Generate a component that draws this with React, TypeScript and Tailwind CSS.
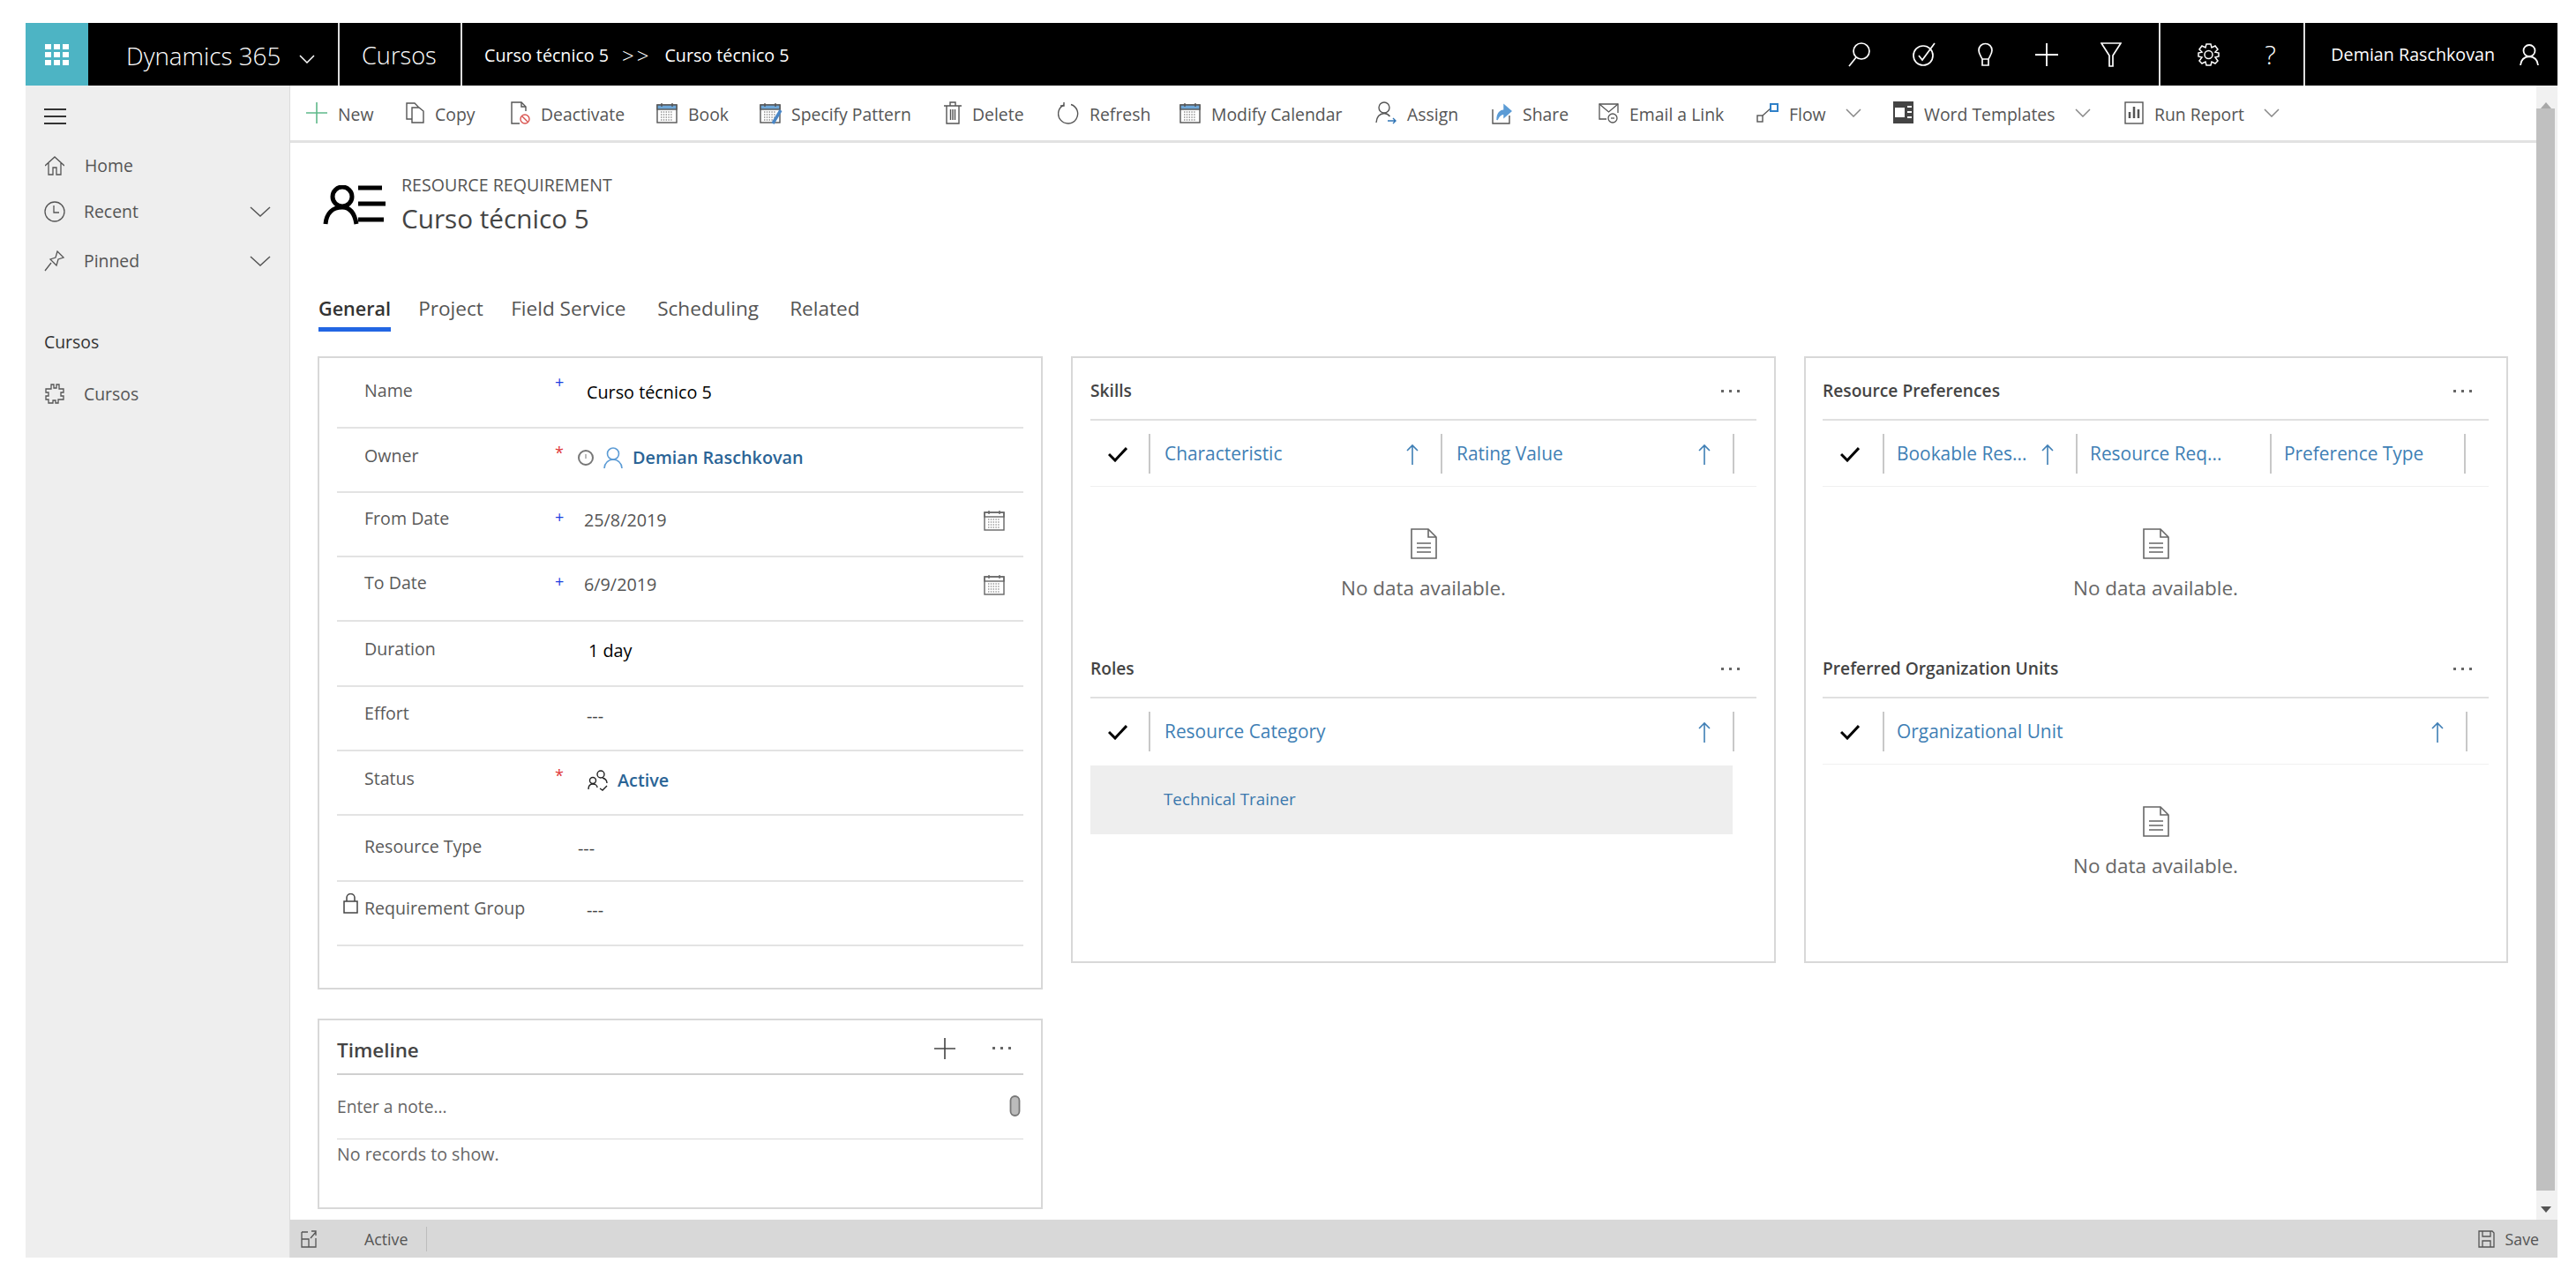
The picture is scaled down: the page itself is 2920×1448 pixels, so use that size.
import type { ReactNode } from 'react';

function Ico({ w, h, vb, sw = 1.5, className = '', children }: { w: number; h: number; vb?: string; sw?: number; className?: string; children: ReactNode }) {
  return (
    <svg width={w} height={h} viewBox={vb ?? `0 0 ${w} ${h}`} fill="none" stroke="currentColor" strokeWidth={sw} className={`shrink-0 ${className}`}>
      {children}
    </svg>
  );
}

const Chevron = ({ w = 24, h = 12, className = '' }: { w?: number; h?: number; className?: string }) => (
  <Ico w={w} h={h} className={className}><path d={`M1 1 L${w / 2} ${h - 1} L${w - 1} 1`} /></Ico>
);

const UserIco = ({ className = '', sw = 1.7 }: { className?: string; sw?: number }) => (
  <Ico w={22} h={24} vb="0 0 22 24" sw={sw} className={className}>
    <circle cx="11" cy="7.5" r="6.5" />
    <path d="M1 24 C1.5 18 5 14.5 11 14 C17 14.5 20.5 18 21 24" />
  </Ico>
);

const CalendarIco = ({ className = '', blue = false }: { className?: string; blue?: boolean }) => (
  <Ico w={24} h={24} sw={1.4} className={className}>
    <rect x="1" y="3" width="22" height="20" />
    <rect x="1" y="3" width="22" height="5" fill={blue ? '#6ea7d8' : 'none'} />
    <path d="M6 1v4M18 1v4" />
    <path d="M5 11h14M5 14h14M5 17h14M5 20h14" strokeDasharray="1.4 1.4" strokeWidth="1" />
  </Ico>
);

const PageIco = ({ className = '' }: { className?: string }) => (
  <Ico w={30} h={35} sw={1.6} className={className}>
    <path d="M1 1 H20 L29 10 V34 H1 Z" />
    <path d="M20 1 V10 H29" />
    <path d="M7 17 H23 M7 22 H23 M7 27 H23" />
  </Ico>
);

const Dots = ({ className = '' }: { className?: string }) => (
  <span className={`flex gap-[6px] ${className}`}>
    <i className="block w-[3px] h-[3px] bg-[#666]" />
    <i className="block w-[3px] h-[3px] bg-[#666]" />
    <i className="block w-[3px] h-[3px] bg-[#666]" />
  </span>
);

const Arrow = ({ className = '' }: { className?: string }) => (
  <Ico w={14} h={24} sw={1.6} className={className}><path d="M7 24 V2 M1 8 L7 2 L13 8" /></Ico>
);

const toolbar: { label: string; cls: string; icon: ReactNode; caret?: boolean }[] = [
  { label: 'New', cls: 'w-[113px]', icon: <Ico w={24} h={24} sw={1.6} className="text-[#5fb98a]"><path d="M12 0v24M0 12h24" /></Ico> },
  { label: 'Copy', cls: 'w-[119px]', icon: <Ico w={21} h={24} sw={1.4}><path d="M1 1 H10 L14 5 V19 H1 Z" /><path d="M7 6 H15 L20 10 V23 H7 Z" fill="#fff" /></Ico> },
  { label: 'Deactivate', cls: 'w-[165px]', icon: <Ico w={22} h={26} sw={1.4}><path d="M17 11 V6 L12 1 H1 V25 H10" /><path d="M12 1 V6 H17" /><circle cx="16" cy="20" r="5" stroke="#d9534f" /><path d="M13 17 L19 23" stroke="#d9534f" /></Ico> },
  { label: 'Book', cls: 'w-[117px]', icon: <CalendarIco blue /> },
  { label: 'Specify Pattern', cls: 'w-[209px]', icon: <span className="relative"><CalendarIco blue /><Ico w={14} h={18} sw={3.5} className="absolute right-[-2px] bottom-[-2px] text-[#4a86c5]"><path d="M12 1 L3 16" /></Ico></span> },
  { label: 'Delete', cls: 'w-[129px]', icon: <Ico w={20} h={26} sw={1.4}><path d="M0 5 H20 M7 5 V1 H13 V5 M3 5 V25 H17 V5 M7.5 9 V21 M10 9 V21 M12.5 9 V21" /></Ico> },
  { label: 'Refresh', cls: 'w-[138px]', icon: <Ico w={24} h={26} sw={1.4}><path d="M15 3.5 A11 11 0 1 1 7 4" /><path d="M7 1 V5 H3" /></Ico> },
  { label: 'Modify Calendar', cls: 'w-[222px]', icon: <CalendarIco blue /> },
  { label: 'Assign', cls: 'w-[132px]', icon: <Ico w={24} h={26} sw={1.4}><circle cx="10" cy="7" r="6" /><path d="M1 24 C1.5 17 5 14 10 13.5 C13 13.7 15 15 16.5 17" /><path d="M14 22 H23 M20 19 L23 22 L20 25" stroke="#2f74b5" /></Ico> },
  { label: 'Share', cls: 'w-[121px]', icon: <Ico w={23} h={26} sw={1.4}><path d="M1 9 V25 H20 V16" /><path d="M6 21 C6 13 10 10 14 10 V4 L22 11 L14 18 V14 C11 14 8 16 6 21 Z" fill="#5b9bd5" stroke="#5b9bd5" /></Ico> },
  { label: 'Email a Link', cls: 'w-[179px]', icon: <Ico w={23} h={24} sw={1.3}><path d="M9 19 H1 V2 H22 V12" /><path d="M1 2 L11.5 11 L22 2" /><circle cx="16" cy="18" r="5" /><path d="M14 18 h4" /></Ico> },
  { label: 'Flow', cls: 'w-[155px]', caret: true, icon: <Ico w={25} h={22} sw={1.4}><rect x="1" y="14" width="6" height="7" /><path d="M7 14 L16 6" /><rect x="16" y="1" width="8" height="8" stroke="#2f80c8" strokeWidth="2" /></Ico> },
  { label: 'Word Templates', cls: 'w-[262px]', caret: true, icon: <span className="relative block w-[23px] h-[25px] bg-[#444]"><span className="absolute left-[2px] top-[7px] w-[11px] h-[11px] bg-white" /><span className="absolute right-[2px] top-[5px] w-[5px] h-[2px] bg-white" /><span className="absolute right-[2px] top-[11px] w-[5px] h-[2px] bg-white" /><span className="absolute right-[2px] top-[17px] w-[5px] h-[2px] bg-white" /></span> },
  { label: 'Run Report', cls: 'w-[200px]', caret: true, icon: <Ico w={22} h={26} sw={1.4}><rect x="1" y="1" width="20" height="24" /><path d="M6 19 V12 M11 19 V6 M16 19 V9" strokeWidth="2.5" /></Ico> },
];

const tabs = [
  { label: 'Project', w: 'w-[105px]' },
  { label: 'Field Service', w: 'w-[166px]' },
  { label: 'Scheduling', w: 'w-[150px]' },
  { label: 'Related', w: 'w-[90px]' },
];

const rows = [
  { label: 'Name', mark: 'blue', h: 'h-[78px]', lpt: 'pt-[22px]', vpt: 'pt-[24px]', vx: 'w-[36px]', value: <span className="text-black font-medium">Curso técnico 5</span> },
  { label: 'Owner', mark: 'red', h: 'h-[71px]', lpt: 'pt-[16px]', vpt: 'pt-[18px]', vx: 'w-[26px]', value: (
    <span className="flex items-center gap-[11px] text-[#2a6496] font-semibold">
      <Ico w={18} h={18} sw={2} className="text-[#777]"><circle cx="9" cy="9" r="8" /><path d="M9 5v5" strokeWidth="1" /></Ico>
      <UserIco className="text-[#5b9bd5]" sw={1.6} />
      Demian Raschkovan
    </span>
  ) },
  { label: 'From Date', mark: 'blue', h: 'h-[71px]', lpt: 'pt-[14px]', vpt: 'pt-[16px]', vx: 'w-[33px]', cal: true, value: <span className="text-[#555]">25/8/2019</span> },
  { label: 'To Date', mark: 'blue', h: 'h-[71px]', lpt: 'pt-[14px]', vpt: 'pt-[16px]', vx: 'w-[33px]', cal: true, value: <span className="text-[#555]">6/9/2019</span> },
  { label: 'Duration', h: 'h-[72px]', lpt: 'pt-[16px]', vpt: 'pt-[18px]', vx: 'w-[38px]', value: <span className="text-black font-medium">1 day</span> },
  { label: 'Effort', h: 'h-[71px]', lpt: 'pt-[15px]', vpt: 'pt-[18px]', vx: 'w-[36px]', value: <span className="text-[#444] font-medium">---</span> },
  { label: 'Status', mark: 'red', h: 'h-[71px]', lpt: 'pt-[16px]', vpt: 'pt-[18px]', vx: 'w-[37px]', value: (
    <span className="flex items-center gap-[10px] text-[#2a6496] font-semibold">
      <Ico w={24} h={24} sw={1.4} className="text-[#222]"><circle cx="15" cy="5" r="4" /><circle cx="6" cy="12" r="3.5" /><path d="M1 22 C1 18 3 16 6 16 C9 16 11 18 11 20" /><path d="M17 9 C20 10 22 12 22 15" /><path d="M14 21 L17 23 L22 18" /></Ico>
      Active
    </span>
  ) },
  { label: 'Resource Type', h: 'h-[73px]', lpt: 'pt-[20px]', vpt: 'pt-[22px]', vx: 'w-[26px]', value: <span className="text-[#444] font-medium">---</span> },
  { label: 'Requirement Group', lock: true, h: 'h-[71px]', lpt: 'pt-[15px]', vpt: 'pt-[17px]', vx: 'w-[36px]', value: <span className="text-[#444] font-medium">---</span> },
];

function FormRow({ r }: { r: (typeof rows)[number] }) {
  return (
    <div className={`relative flex border-b-2 border-[#e3e3e3] box-content ${r.h}`}>
      <div className={`w-[247px] shrink-0 pl-[31px] leading-[30px] text-[19.6px] text-[#5a5a5a] ${r.lpt}`}>{r.label}</div>
      {r.lock && (
        <Ico w={17} h={23} sw={1.5} className="absolute left-[7px] top-[13px] text-[#444]"><rect x="1" y="9" width="15" height="13" /><path d="M4 9 V5 A4.5 4.5 0 0 1 13 5 V9" /></Ico>
      )}
      <span className={`shrink-0 pt-[15px] text-[18px] leading-[24px] ${r.vx} ${r.mark === 'red' ? 'text-[#e03a3a]' : 'text-[#1c3fe0]'}`}>
        {r.mark === 'red' ? '*' : r.mark ? '+' : ''}
      </span>
      <div className={`leading-[30px] text-[19.8px] ${r.vpt}`}>{r.value}</div>
      {r.cal && <CalendarIco className="absolute right-[21px] top-[19px] text-[#666]" />}
    </div>
  );
}

function GridHeader({ check, cols, pad = 'pl-[16px]' }: { check: string; pad?: string; cols: { label: string; w: string; arrow?: boolean }[] }) {
  return (
    <div className="flex h-[45px] items-center">
      <span className={`flex shrink-0 ${check}`}>
        <Ico w={22} h={18} sw={3} className="text-black"><path d="M1 9 L8 16 L21 2" /></Ico>
      </span>
      {cols.map((c) => (
        <div key={c.label} className={`flex h-[45px] items-center justify-between border-l-2 border-[#c8c8c8] pr-[25px] text-[20.9px] text-[#3f7fb5] ${pad} ${c.w}`}>
          <span className="whitespace-nowrap">{c.label}</span>
          {c.arrow && <Arrow />}
        </div>
      ))}
      <span className="h-[45px] border-l-2 border-[#c8c8c8]" />
    </div>
  );
}

function Empty() {
  return (
    <>
      <div className="h-[15px] border-b border-[#f0f0f0]" />
      <div className="flex flex-col items-center pt-[47px] text-[#666]">
        <PageIco />
        <span className="mt-[18px] leading-[30px] text-[22.5px]">No data available.</span>
      </div>
    </>
  );
}

function Section({ title, children, h = 'h-[315px]', dots }: { title: string; children: ReactNode; h?: string; dots: string }) {
  return (
    <section className={h}>
      <div className="flex h-[71px] items-center justify-between border-b-2 border-[#e0e0e0] pt-[6px]">
        <span className="font-semibold text-[19.2px] text-[#444]">{title}</span>
        <Dots className={dots} />
      </div>
      <div className="pt-[15px]">{children}</div>
    </section>
  );
}

export default function App() {
  return (
    <div className="w-[2920px] h-[1448px] bg-white pt-[26px] pl-[29px] font-['Open_Sans','Noto_Sans',sans-serif] overflow-hidden">
      <div className="w-[2870px] h-[1400px] flex flex-col">
        <header className="h-[71px] bg-black text-white flex items-stretch shrink-0">
          <div className="w-[71px] bg-[#4db4c4] grid grid-cols-[7px_7px_7px] gap-[3px] content-center justify-center">
            {Array.from({ length: 9 }).map((_, i) => <i key={i} className="block w-[7px] h-[6px] bg-white" />)}
          </div>
          <div className="w-[283px] pl-[43px] pt-[4px] flex items-center text-[27.8px] font-light">
            Dynamics 365
            <Chevron w={18} h={10} className="ml-[21px] mt-[6px]" />
          </div>
          <div className="w-[139px] border-l-2 border-[#ddd] pl-[25px] pt-[4px] flex items-center text-[27.2px] font-light">Cursos</div>
          <div className="border-l-2 border-[#ddd] pl-[25px] pt-[2px] flex items-center text-[19.7px]">
            Curso técnico 5
            <span className="mx-[15px] text-[24px] font-light tracking-[3px]">&gt;&gt;</span>
            Curso técnico 5
          </div>
          <div className="ml-auto flex items-center">
            <div className="flex items-center gap-[48px] pr-[42px]">
              <Ico w={25} h={28} sw={1.7}><circle cx="15" cy="10" r="9" /><path d="M9 17 L1 27" /></Ico>
              <Ico w={26} h={28} sw={1.7}><circle cx="12" cy="15" r="11" /><path d="M7 15 L11 20 L25 1" /></Ico>
              <Ico w={17} h={28} sw={1.7}><path d="M5 19 C3 15 1 13 1 9 A7.5 7.5 0 0 1 16 9 C16 13 14 15 12 19 Z M5 19 V26 H12 V19" /></Ico>
              <Ico w={26} h={26} sw={1.8}><path d="M13 0 V26 M0 13 H26" /></Ico>
              <Ico w={24} h={28} sw={1.7}><path d="M1 1 H23 L14 15 V27 H10 V15 Z" /></Ico>
            </div>
            <div className="h-full border-l-2 border-[#ddd] flex items-center pl-[42px] pr-[30px] gap-[51px]">
              <Ico w={25} h={26} sw={1.5}><circle cx="12.5" cy="13" r="4.5" /><path d="M10 1 H15 L16 5 L20 3 L23 7 L20 10 L24 11 V15 L20 16 L23 20 L20 23 L16 21 L15 25 H10 L9 21 L5 23 L2 20 L5 16 L1 15 V11 L5 10 L2 7 L5 3 L9 5 Z" /></Ico>
              <span className="text-[30px] font-light leading-none w-[14px]">?</span>
            </div>
            <div className="h-full border-l-2 border-[#ddd] flex items-center pl-[29px] pr-[21px] gap-[28px] text-[19.7px]">
              Demian Raschkovan
              <UserIco sw={1.8} />
            </div>
          </div>
        </header>

        <div className="flex flex-1 min-h-0">
          <aside className="w-[300px] shrink-0 bg-[#eeeeee] border-r border-[#dcdcdc] text-[#555] text-[19.4px]">
            <div className="flex flex-col gap-[6px] pl-[21px] pt-[26px]">
              <i className="block w-[25px] h-[2px] bg-[#333]" />
              <i className="block w-[25px] h-[2px] bg-[#333]" />
              <i className="block w-[25px] h-[2px] bg-[#333]" />
            </div>
            <div className="flex items-center pl-[22px] h-[30px] mt-[32px]">
              <Ico w={22} h={22} sw={1.3} className="mr-[23px] text-[#555]"><path d="M0 11 L11 1 L22 11 M4 8 V21 H9 V13 H13 V21 H18 V8" /></Ico>
              Home
            </div>
            <div className="flex items-center pl-[21px] pr-[21px] h-[30px] mt-[22px]">
              <Ico w={24} h={24} sw={1.3} className="mr-[21px]"><circle cx="12" cy="12" r="11" /><path d="M11 5 V13 H17" /></Ico>
              Recent
              <Chevron className="ml-auto" />
            </div>
            <div className="flex items-center pl-[21px] pr-[21px] h-[30px] mt-[26px]">
              <Ico w={24} h={24} sw={1.3} className="mr-[21px]"><path d="M15 1 L22 8 L16 10 L14 17 L7 10 L13 8 Z M8 14 L1 23" /></Ico>
              Pinned
              <Chevron className="ml-auto" />
            </div>
            <div className="pl-[21px] mt-[62px] h-[30px] leading-[30px] text-[#333] font-medium">Cursos</div>
            <div className="flex items-center pl-[21px] h-[30px] mt-[29px]">
              <Ico w={24} h={24} sw={1.3} className="mr-[21px]"><path d="M8 1 H11 V5 H14 V1 H17 V6 H22 V10 H19 V14 H22 V18 H16 V22 H13 V19 H10 V22 H5 V18 H2 V14 H5 V10 H2 V6 H8 Z" /></Ico>
              Cursos
            </div>
          </aside>

          <div className="flex-1 min-w-0 flex flex-col">
            <div className="flex flex-1 min-h-0">
              <main className="flex-1 min-w-0">
                <nav className="h-[65px] border-b-[3px] border-[#e2e2e2] flex items-center pl-[18px] text-[19.4px] text-[#555]">
                  {toolbar.map((t) => (
                    <div key={t.label} className={`flex items-center shrink-0 ${t.cls}`}>
                      {t.icon}
                      <span className="ml-[12px] pt-[3px] whitespace-nowrap">{t.label}</span>
                      {t.caret && <Chevron w={18} h={10} className="ml-[22px] text-[#888]" />}
                    </div>
                  ))}
                </nav>

                <div className="h-[150px] flex pl-[36px] pt-[34px]">
                  <Ico w={72} h={46} sw={5} className="mt-[14px] text-black">
                    <circle cx="23" cy="13" r="11" />
                    <path d="M4 44 C5 32 12 25 23 25 C32 25 37 32 39 44" />
                    <path d="M41 3 H68 M41 21 H72 M41 39 H70" strokeWidth="5" />
                  </Ico>
                  <div className="ml-[18px] text-[#555]">
                    <div className="text-[19.6px] leading-[28px]">RESOURCE REQUIREMENT</div>
                    <div className="text-[29.7px] leading-[40px] mt-[4px] text-[#444]">Curso técnico 5</div>
                  </div>
                </div>

                <div className="h-[92px] pl-[32px] flex text-[#555] text-[22.6px]">
                  <div className="h-[64px] mr-[31px] border-b-[5px] border-[#2266e3] pt-[23px] leading-[30px] font-semibold text-[#333] text-[21.6px]">General</div>
                  {tabs.map((t) => (
                    <div key={t.label} className={`pt-[23px] leading-[30px] ${t.w}`}>{t.label}</div>
                  ))}
                </div>

                <div className="flex items-start gap-[32px] pl-[31px]">
                  <div className="w-[822px] flex flex-col gap-[33px]">
                    <div className="h-[718px] border-2 border-[#d8d8d8] px-[20px]">
                      {rows.map((r) => <FormRow key={r.label} r={r} />)}
                    </div>
                    <div className="h-[216px] border-2 border-[#d8d8d8] px-[20px] text-[#666]">
                      <div className="flex items-center justify-between h-[62px] border-b-2 border-[#d0d0d0] pr-[14px]">
                        <span className="text-[22.4px] font-semibold text-[#444] pt-[8px]">Timeline</span>
                        <span className="flex items-center gap-[41px] pt-[3px]">
                          <Ico w={26} h={26} sw={1.6} className="text-[#444]"><path d="M13 1 V25 M1 13 H25" /></Ico>
                          <Dots />
                        </span>
                      </div>
                      <div className="flex items-center justify-between h-[73px] border-b border-[#d8d8d8] pr-[3px] text-[19.2px]">
                        <span>Enter a note...</span>
                        <Ico w={13} h={24} sw={1.8} className="text-[#777] mb-[2px]"><rect x="1.5" y="1" width="10" height="22" rx="5" fill="#bbb" /></Ico>
                      </div>
                      <div className="pt-[2px] leading-[30px] text-[19.6px]">No records to show.</div>
                    </div>
                  </div>

                  <div className="w-[799px] h-[688px] border-2 border-[#d8d8d8] pl-[20px] pr-[20px]">
                    <Section title="Skills" dots="mr-[19px]">
                      <GridHeader check="w-[66px] pl-[20px]" cols={[{ label: 'Characteristic', w: 'w-[331px]', arrow: true }, { label: 'Rating Value', w: 'w-[331px]', arrow: true }]} />
                      <Empty />
                    </Section>
                    <Section title="Roles" h="h-[300px]" dots="mr-[19px]">
                      <GridHeader check="w-[66px] pl-[20px]" cols={[{ label: 'Resource Category', w: 'w-[662px]', arrow: true }]} />
                      <div className="mt-[16px] h-[78px] w-[728px] bg-[#eeeeee] pl-[83px] pt-[23px] leading-[30px] text-[18.8px] text-[#3b78ad]">Technical Trainer</div>
                    </Section>
                  </div>

                  <div className="w-[798px] h-[688px] border-2 border-[#d8d8d8] pl-[19px] pr-[20px]">
                    <Section title="Resource Preferences" dots="mr-[19px]">
                      <GridHeader check="w-[68px] pl-[20px]" pad="pl-[14px]" cols={[{ label: 'Bookable Res...', w: 'w-[219px]', arrow: true }, { label: 'Resource Req...', w: 'w-[220px]' }, { label: 'Preference Type', w: 'w-[220px]' }]} />
                      <Empty />
                    </Section>
                    <Section title="Preferred Organization Units" h="h-[300px]" dots="mr-[19px]">
                      <GridHeader check="w-[68px] pl-[20px]" pad="pl-[14px]" cols={[{ label: 'Organizational Unit', w: 'w-[661px]', arrow: true }]} />
                      <Empty />
                    </Section>
                  </div>
                </div>
              </main>

              <div className="w-[24px] shrink-0 bg-[#f1f1f1] relative flex flex-col">
                <div className="h-[26px] flex items-end justify-center pr-[3px]">
                  <i className="block w-0 h-0 border-x-[6px] border-x-transparent border-b-[7px] border-b-[#a8a8a8]" />
                </div>
                <div className="w-[21px] h-[1227px] bg-[#c0c0c0]" />
                <div className="flex-1 flex items-center justify-center pr-[3px] pt-[10px]">
                  <i className="block w-0 h-0 border-x-[6px] border-x-transparent border-t-[7px] border-t-[#555]" />
                </div>
              </div>
            </div>

            <footer className="h-[43px] shrink-0 bg-[#d8d8d8] flex items-center pl-[12px] pr-[21px] text-[#555] text-[17.8px]">
              <Ico w={18} h={20} sw={1.3}><path d="M1 2 V19 H17 V9 M1 10 H9 V19 M8 2 H1 M11 9 L17 2 M12 1 H17 V6" /></Ico>
              <span className="ml-[54px] pt-[2px]">Active</span>
              <span className="ml-[21px] h-[28px] border-l border-[#bdbdbd]" />
              <span className="ml-auto flex items-center gap-[12px] pt-[1px]">
                <Ico w={19} h={20} sw={1.3}><path d="M1 1 H16 L18 3 V19 H1 Z M5 1 V7 H14 V1 M5 19 V12 H14 V19" /></Ico>
                Save
              </span>
            </footer>
          </div>
        </div>
      </div>
    </div>
  );
}
